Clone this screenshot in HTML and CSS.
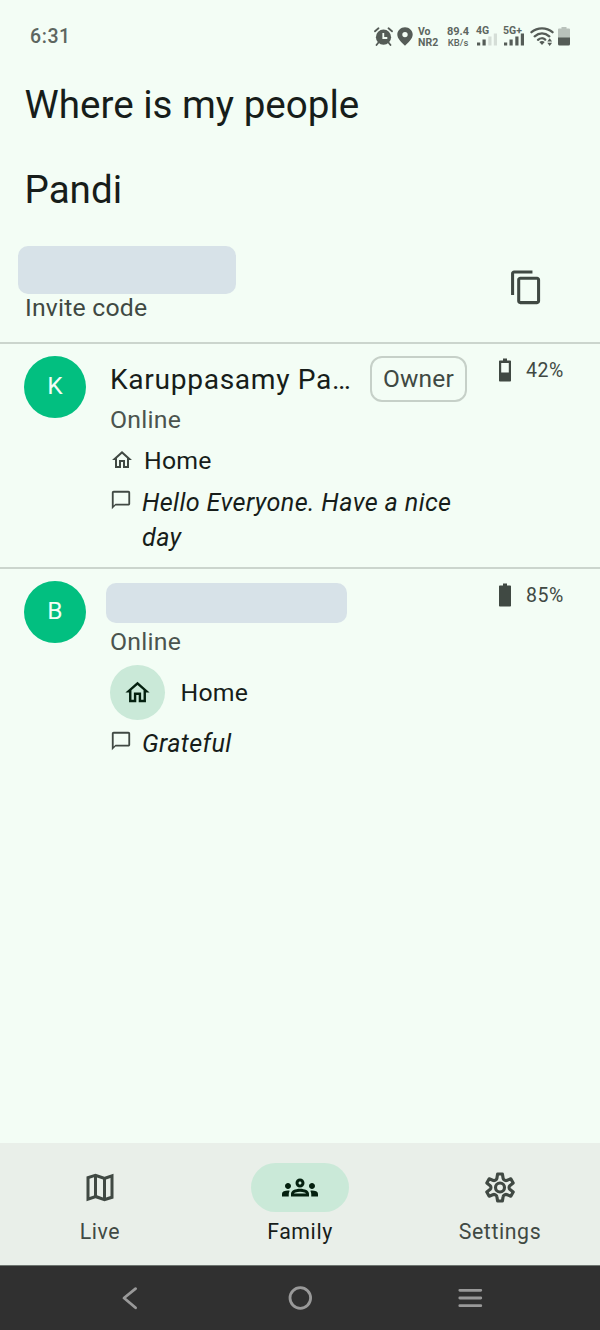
FILE: index.html
```html
<!DOCTYPE html>
<html lang="en">
<head>
<meta charset="utf-8">
<title>Where is my people</title>
<link rel="stylesheet" href="styles.css">
</head>
<body>
<div class="screen">
  <header class="status">
    <span class="clock">6:31</span>
    <div class="status-icons">
      <svg class="st-alarm" viewBox="0 0 19 19" width="19" height="19"><circle cx="9.500" cy="10.200" r="7.600"/><path class="st-line" d="M1 4.300 4.500 1.300M18 4.300 14.500 1.300M4.500 15.500l-2 2.500M14.500 15.500l2 2.500"/><path class="st-cut" d="M9.300 6v5h4"/></svg>
      <svg class="st-pin" viewBox="0 0 16 19" width="16" height="19"><path fill-rule="evenodd" d="M8 .2C3.700.2.300 3.500.300 7.500c0 4.300 4.500 8.100 7.700 11.200 3.200-3.100 7.700-6.900 7.700-11.200C15.700 3.500 12.300.2 8 .2zM8 4.900a2.700 2.700 0 1 1 0 5.400 2.700 2.700 0 0 1 0-5.400z"/></svg>
      <div class="mini volte"><span>Vo</span><span>NR2</span></div>
      <div class="mini rate"><span>89.4</span><span>KB/s</span></div>
      <div class="signal sig4"><span>4G</span><svg viewBox="0 0 22 14" width="22" height="14"><path d="M1 9.500h3.200v3H1zM6.500 6.500h3.200v6H6.500z"/><path class="faint" d="M12.300 3.500h3.200v9h-3.200zM17.800 .5H21v12h-3.200z"/></svg></div>
      <div class="signal sig5"><span>5G+</span><svg viewBox="0 0 22 14" width="22" height="14"><path d="M1 9.500h3.200v3H1zM6.500 6.500h3.200v6H6.500zM12.300 3.500h3.200v9h-3.200zM17.800 .5H21v12h-3.200z"/></svg></div>
      <svg class="st-wifi" viewBox="0 0 24 20" width="24" height="20"><path class="st-wave" d="M1.500 5.200C7.500 0 16.500 0 22.500 5.200M4.700 9.300c4.400-3.800 10.200-3.800 14.600 0M8 12.800c2.300-2 5.300-2 7.200-.2"/><path d="m9.300 15 2.700 3 2.700-3c-1.700-1.300-3.700-1.300-5.400 0zM17.300 14.500l2.400-3.300 2.400 3.300zM17.300 15.700l2.400 3.300 2.400-3.300z"/></svg>
      <svg class="st-batt" viewBox="0 0 12 19" width="12" height="19"><path class="batt-empty" d="M3.500 0h5v1.500H11a1 1 0 0 1 1 1V11H0V2.500a1 1 0 0 1 1-1h2.500z"/><path d="M0 10.500h12V17a1.500 1.500 0 0 1-1.500 1.500h-9A1.500 1.500 0 0 1 0 17z"/></svg>
    </div>
  </header>

  <main class="content">
    <h1 class="title">Where is my people</h1>
    <h2 class="family">Pandi</h2>

    <section class="invite">
      <div class="invite-info">
        <div class="mask mask-code"></div>
        <p class="invite-label">Invite code</p>
      </div>
      <svg class="copy" viewBox="0 0 24 24"><path d="M16 1H4c-1.100 0-2 .9-2 2v14h2V3h12V1zm3 4H8c-1.100 0-2 .9-2 2v14c0 1.100.9 2 2 2h11c1.100 0 2-.9 2-2V7c0-1.100-.9-2-2-2zm0 16H8V7h11v14z"/></svg>
    </section>

    <section class="member">
      <div class="avatar">K</div>
      <div class="details">
        <div class="name-row"><span class="name">Karuppasamy Pa…</span><span class="chip">Owner</span></div>
        <p class="presence">Online</p>
        <div class="place"><svg class="home-small" viewBox="0 0 24 24"><path d="M12 5.690l5 4.500V18h-2v-6H9v6H7v-7.810l5-4.500M12 3L2 12h3v8h6v-6h2v6h6v-8h3L12 3z"/></svg><span>Home</span></div>
        <div class="note"><svg class="bubble" viewBox="0 0 24 24"><path d="M20 2H4c-1.100 0-2 .9-2 2v18l4-4h14c1.100 0 2-.9 2-2V4c0-1.100-.9-2-2-2zm0 14H6l-2 2V4h16v12z"/></svg><span>Hello Everyone. Have a nice day</span></div>
      </div>
      <div class="battery"><svg viewBox="0 0 12 24"><path fill-rule="evenodd" d="M4 .5h4v2h3.200c.5 0 .8.3.8.8v19.400c0 .5-.3.8-.8.8H.8c-.5 0-.8-.3-.8-.8V3.300c0-.5.3-.8.800-.8H4zM2.200 5v9.500h7.600V5z"/></svg><span>42%</span></div>
    </section>

    <section class="member second">
      <div class="avatar">B</div>
      <div class="details">
        <div class="mask mask-name"></div>
        <p class="presence">Online</p>
        <div class="place-big"><span class="home-disc"><svg viewBox="0 0 24 24"><path d="M12 5.690l5 4.500V18h-2v-6H9v6H7v-7.810l5-4.500M12 3L2 12h3v8h6v-6h2v6h6v-8h3L12 3z"/></svg></span><span>Home</span></div>
        <div class="note"><svg class="bubble" viewBox="0 0 24 24"><path d="M20 2H4c-1.100 0-2 .9-2 2v18l4-4h14c1.100 0 2-.9 2-2V4c0-1.100-.9-2-2-2zm0 14H6l-2 2V4h16v12z"/></svg><span>Grateful</span></div>
      </div>
      <div class="battery"><svg viewBox="0 0 12 24"><path d="M4 .5h4v2h3.200c.5 0 .8.3.8.8v19.400c0 .5-.3.8-.8.8H.8c-.5 0-.8-.3-.8-.8V3.300c0-.5.3-.8.800-.8H4z"/></svg><span>85%</span></div>
    </section>
  </main>

  <nav class="tabs">
    <a class="tab"><span class="pill"><svg viewBox="0 0 24 24"><path fill-rule="evenodd" d="M3 4.700 9 2.800l6 2.100 6-2.100v16.500L15 21.200l-6-2.100-6 2.100zM5 6.100v12.300l3-1V5.200zM10 5.300v11.900l4 1.400V6.700zM16 6.700v12l3-1V5.700z"/></svg></span>Live</a>
    <a class="tab active"><span class="pill"><svg viewBox="0 0 24 24"><path d="M4 13c1.100 0 2-.9 2-2s-.9-2-2-2-2 .9-2 2 .9 2 2 2zm1.130 1.100c-.37-.06-.74-.1-1.130-.1-.99 0-1.930.21-2.780.58C.48 14.900 0 15.620 0 16.430V18h4.500v-1.610c0-.83.23-1.610.63-2.290zM20 13c1.100 0 2-.9 2-2s-.9-2-2-2-2 .9-2 2 .9 2 2 2zm4 3.430c0-.81-.48-1.530-1.220-1.850-.85-.37-1.790-.58-2.780-.58-.39 0-.76.04-1.130.1.4.68.63 1.460.63 2.290V18H24v-1.570zm-7.760-2.780c-1.170-.52-2.610-.9-4.240-.9s-3.070.39-4.240.9C6.680 14.130 6 15.210 6 16.390V18h12v-1.610c0-1.180-.68-2.260-1.760-2.740zM8.070 16c.09-.23.13-.39.91-.69.97-.38 1.990-.56 3.020-.56s2.050.18 3.020.56c.77.3.81.46.91.69H8.070zM12 8c.55 0 1 .45 1 1s-.45 1-1 1-1-.45-1-1 .45-1 1-1m0-2c-1.660 0-3 1.340-3 3s1.340 3 3 3 3-1.340 3-3-1.340-3-3-3z"/></svg></span>Family</a>
    <a class="tab"><span class="pill"><svg class="gear" viewBox="0 0 24 24"><path d="M10.400 3h3.200l.5 3c.1.700 1.700 1.600 2.300 1.300l2.800-1.100 1.600 2.800-2.300 1.800c-.6.500-.6 1.900 0 2.400l2.300 1.800-1.600 2.800-2.800-1.100c-.6-.3-2.200.6-2.300 1.300l-.5 3h-3.200l-.5-3c-.1-.7-1.700-1.600-2.300-1.300l-2.800 1.100L3.200 15l2.300-1.800c.6-.5.600-1.900 0-2.400L3.200 9l1.600-2.800 2.800 1.100c.6.3 2.200-.6 2.300-1.300z"/><circle cx="12" cy="12" r="3"/></svg></span>Settings</a>
  </nav>

  <footer class="sysbar">
    <svg viewBox="0 0 26 26"><path d="M18.600 3.700 7 13l11.600 9.800"/></svg>
    <svg viewBox="0 0 26 26"><circle cx="13.300" cy="13" r="10.300"/></svg>
    <svg viewBox="0 0 26 26"><path d="M2.800 5.300h21M2.800 13h21M2.800 20.700h21"/></svg>
  </footer>
</div>
</body>
</html>
```
FILE: styles.css
```css
* { box-sizing: border-box; }
body { margin: 0; background: #f3fdf5; font-family: Roboto, "Liberation Sans", sans-serif; color: #171d1a; }
h1, h2, p { margin: 0; font-weight: 400; }
.screen { width: 600px; height: 1330px; display: flex; flex-direction: column; }

.status { height: 73px; display: flex; align-items: center; justify-content: space-between; padding: 0 30px; color: #5d6660; }
.clock { font-size: 19.500px; font-weight: 500; letter-spacing: 0.6px; line-height: 24px; }
.status-icons { display: flex; align-items: center; margin-left: auto; }
.status svg { display: block; fill: #555c57; flex: none; }
.status .st-line { stroke: #555c57; stroke-width: 1.8; stroke-linecap: round; }
.status .st-cut { fill: none; stroke: #f3fdf5; stroke-width: 1.8; }
.status .st-wave { fill: none; stroke: #555c57; stroke-width: 2.3; stroke-linecap: round; }
.status .faint { fill: #d5ded7; }
.status .batt-empty { fill: #b9c2bb; }
.st-pin { margin-left: 4px; }
.mini { display: flex; flex-direction: column; font-size: 10.5px; line-height: 11px; font-weight: 700; white-space: nowrap; }
.volte { width: 21px; margin-left: 5px; }
.rate { width: 22px; margin-left: 8px; align-items: center; font-size: 11px; }
.rate span:last-child { font-size: 9.500px; font-weight: 500; }
.signal { width: 22px; height: 20px; display: grid; font-size: 10.500px; line-height: 8px; font-weight: 700; }
.signal span, .signal svg { grid-area: 1 / 1; }
.signal svg { align-self: end; }
.sig4 { margin-left: 7px; }
.sig5 { margin-left: 5px; }
.st-wifi { margin-left: 5px; }
.st-batt { margin-left: 4px; }

.content { flex: 1; }
.title { height: 64px; padding-left: 24.500px; font-size: 38.6px; line-height: 64px; }
.family { height: 107px; padding: 21px 0 0 24.500px; font-size: 38.600px; line-height: 64px; }
.mask { background: #d7e2e8; border-radius: 10px; }
.invite { height: 100px; display: flex; justify-content: space-between; padding: 2px 55.500px 0 18px; border-bottom: 2px solid #cbd5cd; }
.mask-code { width: 218px; height: 48px; }
.invite-label { padding-left: 7px; font-size: 24.800px; line-height: 27px; letter-spacing: 0.2px; color: #404943; }
.copy { width: 36.700px; height: 36.700px; margin-top: 23px; fill: #404943; }

.member { height: 225px; display: flex; align-items: flex-start; padding: 12px 36px 0 24px; border-bottom: 2px solid #cbd5cd; }
.member.second { border-bottom: 0; }
.avatar { flex: none; width: 62px; height: 62px; border-radius: 50%; background: #02bf80; color: #f3fdf5; font-size: 24.500px; line-height: 60px; text-align: center; }
.details { width: 357px; margin-left: 24px; }
.name-row { display: flex; justify-content: space-between; height: 46px; }
.name { white-space: nowrap; font-size: 28.200px; line-height: 47px; letter-spacing: 0.65px; }
.chip { width: 97px; height: 46px; border: 2px solid #c6d0c8; border-radius: 12px; text-align: center; font-size: 24.500px; line-height: 42px; letter-spacing: 0.2px; color: #404943; }
.presence { font-size: 24.800px; line-height: 35px; letter-spacing: 0.25px; color: #4b544e; }
.place, .place-big, .note { font-size: 24.800px; letter-spacing: 0.25px; line-height: 35px; display: flex; }
.place { height: 42px; align-items: center; gap: 10px; margin: 2px 0 4px; }
.place svg { width: 24px; height: 24px; fill: #404943; }
.note { font-style: italic; gap: 10px; font-size: 25.200px; letter-spacing: 0.37px; }
.bubble { flex: none; width: 22px; height: 22px; margin-top: 4px; fill: #404943; }
.battery { width: 65px; margin-left: auto; display: flex; justify-content: space-between; align-items: center; height: 28px; font-size: 19.500px; letter-spacing: 0.6px; color: #404943; }
.battery svg { width: 12px; height: 24px; fill: #404943; }
.mask-name { width: 241px; height: 40px; margin: 2px 0 1px -4px; }
.place-big { height: 55px; margin: 6px 0 6px; align-items: center; gap: 15.500px; }
.home-disc { display: flex; align-items: center; justify-content: center; width: 55px; height: 55px; border-radius: 50%; background: #cae9d8; }
.home-disc svg { width: 29px; height: 29px; fill: #04200f; }

.tabs { height: 122px; display: flex; background: #e9efe9; }
.tab { flex: 1; display: flex; flex-direction: column; align-items: center; padding-top: 20px; font-size: 21.300px; line-height: 40px; letter-spacing: 0.6px; color: #404943; }
.tab.active { color: #171d1a; }
.pill { width: 98px; height: 49px; border-radius: 25px; display: flex; align-items: center; justify-content: center; }
.active .pill { background: #cae9d8; }
.pill svg { width: 36px; height: 37px; fill: #404943; }
.active .pill svg { fill: #04200f; }
.pill .gear { fill: none; stroke: #404943; stroke-width: 2.100; stroke-linejoin: round; }

.sysbar { height: 65px; display: flex; justify-content: center; gap: 144px; align-items: center; background: #303030; border-top: 1px solid #6d746f; }
.sysbar svg { width: 26px; height: 26px; fill: none; stroke: #999; stroke-width: 2.800; stroke-linecap: round; stroke-linejoin: round; }
```
